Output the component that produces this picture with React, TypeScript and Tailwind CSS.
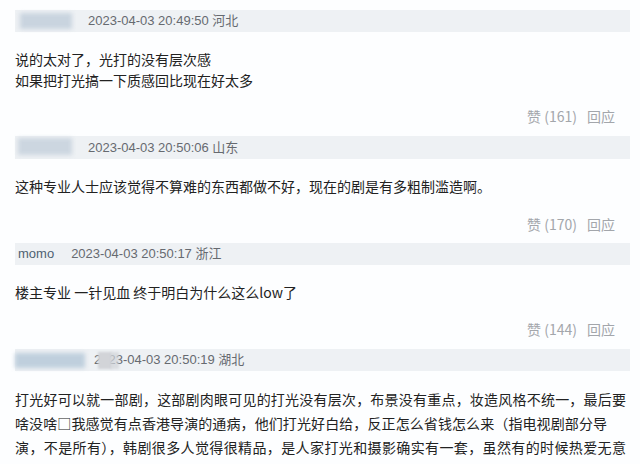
import React from "react";

const cjk = "font-['Noto_Sans_CJK_SC',sans-serif]";
const latin = "font-['Liberation_Sans','Noto_Sans_CJK_SC',sans-serif]";

function Actions({ likes }: { likes: number }) {
    return (
        <div className={`flex justify-end pr-[15px] text-[14px] leading-[20px] text-[#a3a6ab] ${cjk}`}>
            <span>赞 ({likes})</span>
            <span className="ml-[10px]">回应</span>
        </div>
    );
}

export default function App() {
    return (
        <div className="w-[640px] h-[464px] overflow-hidden bg-[#fdfeff] text-[#222] pl-[15px] pr-[10px]">
            {/* comment 1 */}
            <div className="pt-[10px]">
                <div className={`relative flex items-center h-[22px] bg-[#eef1f4] text-[13px] text-[#666a70] ${latin}`}>
                    <div className="absolute left-[5px] top-[3px] w-[52px] h-[16px] bg-[#c9d4df] blur-[2px]" />
                    <span className="ml-[73px]">2023-04-03 20:49:50 河北</span>
                </div>
                <div className={`mt-[17px] text-[14px] leading-[21px] ${cjk}`}>
                    <div>说的太对了，光打的没有层次感</div>
                    <div>如果把打光搞一下质感回比现在好太多</div>
                </div>
                <div className="mt-[15px]">
                    <Actions likes={161} />
                </div>
            </div>

            {/* comment 2 */}
            <div className="pt-[10px]">
                <div className={`relative flex items-center h-[23px] bg-[#eef1f4] text-[13px] text-[#666a70] ${latin}`}>
                    <div className="absolute left-[3px] top-[2px] w-[54px] h-[17px] bg-[#ccd6e0] blur-[2px]" />
                    <span className="ml-[73px]">2023-04-03 20:50:06 山东</span>
                </div>
                <div className={`mt-[16px] text-[14px] leading-[22px] ${cjk}`}>
                    这种专业人士应该觉得不算难的东西都做不好，现在的剧是有多粗制滥造啊。
                </div>
                <div className="mt-[17px]">
                    <Actions likes={170} />
                </div>
            </div>

            {/* comment 3 */}
            <div className="pt-[9px]">
                <div className={`flex items-center h-[22px] bg-[#eef1f4] text-[13px] ${latin}`}>
                    <span className="ml-[3px] text-[#4f6272]">momo</span>
                    <span className="ml-[17px] text-[#666a70]">2023-04-03 20:50:17 浙江</span>
                </div>
                <div className={`mt-[16px] text-[14px] leading-[22px] ${cjk}`}>
                    楼主专业 一针见血 终于明白为什么这么low了
                </div>
                <div className="mt-[16px]">
                    <Actions likes={144} />
                </div>
            </div>

            {/* comment 4 */}
            <div className="pt-[10px]">
                <div className={`relative flex items-center h-[22px] bg-[#eef1f4] text-[13px] text-[#666a70] ${latin}`}>
                    <div className="absolute left-0 top-[4px] w-[70px] h-[15px] bg-[#bfcfdd] blur-[2px]" />
                    <span className="ml-[79px]">2023-04-03 20:50:19 湖北</span>
                    <div className="absolute left-[83px] top-[3px] w-[14px] h-[17px] bg-[#d2d4d8] blur-[1px]" />
                    <div className="absolute left-[96px] top-[3px] w-[8px] h-[17px] bg-[#d2d4d8]/70 blur-[1px]" />
                </div>
                <div className={`mt-[16px] text-[14px] leading-[24px] pr-[4px] ${cjk}`}>
                    <div className="[text-align-last:justify]">打光好可以就一部剧，这部剧肉眼可见的打光没有层次，布景没有重点，妆造风格不统一，最后要</div>
                    <div className="w-[592px] [text-align-last:justify]">啥没啥□我感觉有点香港导演的通病，他们打光好白给，反正怎么省钱怎么来（指电视剧部分导</div>
                    <div className="[text-align-last:justify]">演，不是所有），韩剧很多人觉得很精品，是人家打光和摄影确实有一套，虽然有的时候热爱无意</div>
                    <div className="-mt-[1px] [text-align-last:justify]">义的柔焦滤镜，但是整体来说画面质感和光影层次都在线，这是用心与否的差别，你品你细品</div>
                </div>
            </div>
        </div>
    );
}
